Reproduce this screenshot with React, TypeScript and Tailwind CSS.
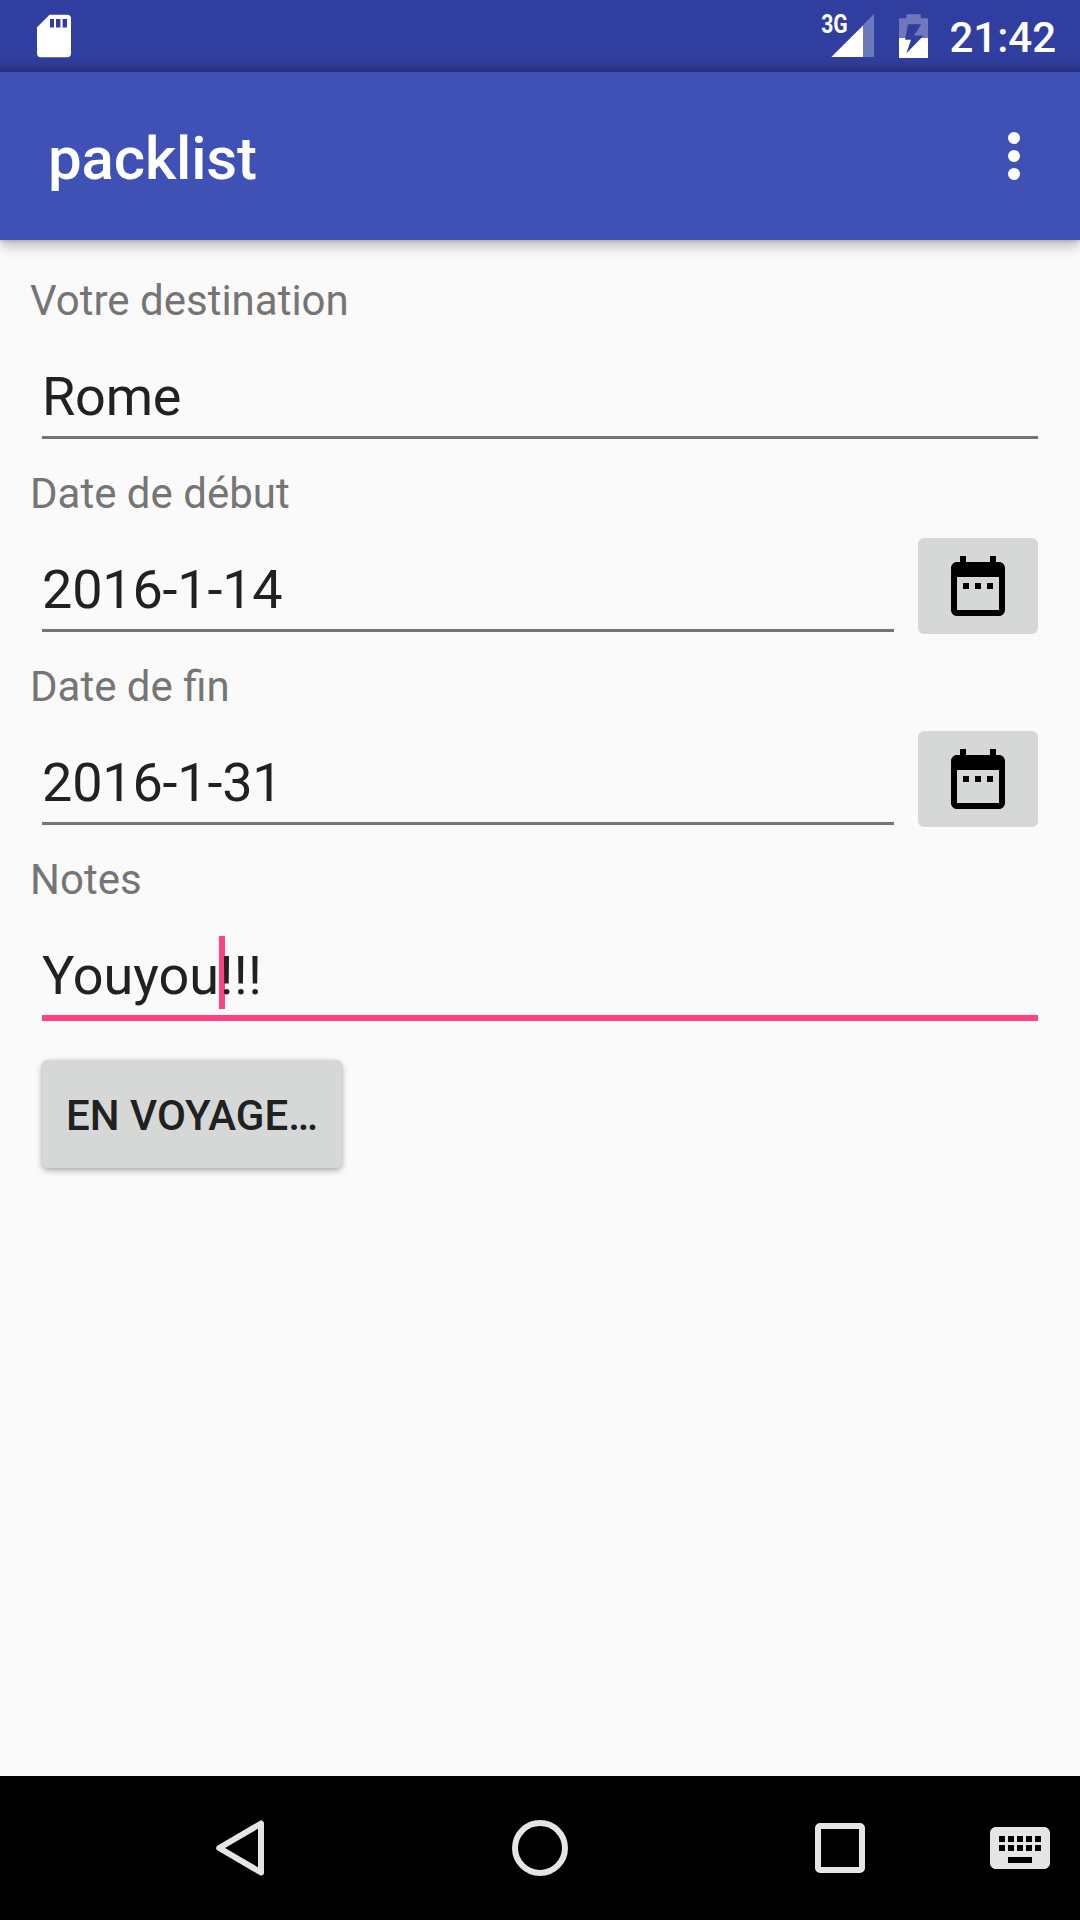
import React from "react";

function SdCardIcon() {
  return (
    <svg className="block h-[72px] w-[72px]" viewBox="0 0 72 72">
      <path
        fill="#fff"
        fillRule="evenodd"
        d="M13.6 14.7H31a4 4 0 0 1 4 4V53.2a4 4 0 0 1-4 4H5a4 4 0 0 1-4-4V27.2zM14 19v8.5h4V19zm6 0v8.5h4.4V19zm6.6 0v8.5H31V19z"
      />
    </svg>
  );
}

function SignalIcon() {
  return (
    <svg className="block h-[72px] w-[60px]" viewBox="0 0 60 72">
      <path fill="#fff" fillOpacity="0.3" d="M54 14v43H43V25z" />
      <path fill="#fff" d="M43 25.5V57H11.3z" />
      <text
        x="1.2"
        y="33.4"
        fill="#fff"
        fontFamily="Roboto, sans-serif"
        fontWeight="700"
        fontSize="25.5"
        textLength="26.5"
        lengthAdjust="spacingAndGlyphs"
      >
        3G
      </text>
    </svg>
  );
}

function BatteryIcon() {
  return (
    <svg className="block h-[72px] w-[30px]" viewBox="0 0 30 72">
      <path fill="#7078bb" d="M7.3 14.2h14.4v4H29v20H0v-20h7.3z" />
      <path fill="#fff" d="M0 38h29v20H0z" />
      <path fill="#303f9f" d="M9 24.3h13.3L15 35.5h9.6L7.3 53.5 12 39.8H6z" />
    </svg>
  );
}

function CalendarIcon() {
  return (
    <svg className="block h-[72px] w-[72px]" viewBox="0 0 24 24">
      <path d="M9 11H7v2h2v-2zm4 0h-2v2h2v-2zm4 0h-2v2h2v-2zm2-7h-1V2h-2v2H8V2H6v2H5c-1.11 0-1.99.9-1.99 2L3 20c0 1.1.89 2 2 2h14c1.1 0 2-.9 2-2V6c0-1.1-.9-2-2-2zm0 16H5V9h14v11z" />
    </svg>
  );
}

function StatusBar() {
  return (
    <div className="flex h-[72px] items-center bg-[#303f9f] bg-[linear-gradient(to_bottom,transparent_58px,rgba(0,0,0,0.06)_64px,rgba(0,0,0,0.22)_72px)] pr-[24px] pl-[36px]">
      <SdCardIcon />
      <div className="ml-auto flex items-center">
        <SignalIcon />
        <div className="ml-[19px]">
          <BatteryIcon />
        </div>
        <span className="ml-[20px] pt-[3px] text-[42px] leading-[74px] font-medium text-white">21:42</span>
      </div>
    </div>
  );
}

function Toolbar() {
  return (
    <header className="flex h-[168px] items-center justify-between bg-[#3f51b5] pr-[30px] pl-[48px] shadow-[0_6px_12px_rgba(0,0,0,0.25),0_1px_3px_rgba(0,0,0,0.16)]">
      <h1 className="pt-[5px] text-[60px] leading-[70px] font-medium tracking-[-0.15px] text-white">packlist</h1>
      <button aria-label="Plus" className="flex h-[144px] w-[72px] flex-col items-center justify-center gap-[6px]">
        <span className="size-[12px] rounded-full bg-white" />
        <span className="size-[12px] rounded-full bg-white" />
        <span className="size-[12px] rounded-full bg-white" />
      </button>
    </header>
  );
}

type FieldProps = {
  label: string;
  children: React.ReactNode;
  focused?: boolean;
  picker?: boolean;
};

function Field({ label, children, focused, picker }: FieldProps) {
  return (
    <div className="h-[193px]">
      <div className="h-[61px] pl-[30px] text-[42px] leading-[61px] text-[#757575]">{label}</div>
      <div className="flex items-start gap-[24px] pr-[42px] pl-[42px]">
        <div
          className={
            focused
              ? "mt-[29px] h-[82px] flex-1 border-b-[6px] border-[#ff4081] text-[54px] leading-[73px] text-[#212121]"
              : "mt-[29px] h-[79px] flex-1 border-b-[3px] border-[#757575] text-[54px] leading-[73px] tracking-[-0.2px] text-[#212121]"
          }
        >
          {children}
        </div>
        {picker && (
          <button aria-label={label} className="mt-[14px] flex h-[96px] w-[120px] items-center justify-center rounded-[6px] bg-[#d6d7d7]">
            <CalendarIcon />
          </button>
        )}
      </div>
    </div>
  );
}

function NavBar() {
  return (
    <nav className="flex h-[144px] items-center bg-black pl-[90px]">
      <div className="flex w-[300px] justify-center">
        <svg className="block size-[72px]" viewBox="0 0 72 72" fill="none" stroke="#e5e5e5" strokeWidth="6" strokeLinejoin="round">
          <path d="M57 11.5v49L15.2 36z" />
        </svg>
      </div>
      <div className="flex w-[300px] justify-center">
        <span className="size-[56px] rounded-full border-[6px] border-[#e5e5e5]" />
      </div>
      <div className="flex w-[300px] justify-center">
        <span className="size-[50px] rounded-[5px] border-[6px] border-[#e5e5e5]" />
      </div>
      <svg className="-ml-[6px] block size-[72px]" viewBox="0 0 24 24" fill="#e5e5e5">
        <path d="M20 5H4c-1.1 0-1.99.9-1.99 2L2 17c0 1.1.9 2 2 2h16c1.1 0 2-.9 2-2V7c0-1.1-.9-2-2-2zm-9 3h2v2h-2V8zm0 3h2v2h-2v-2zM8 8h2v2H8V8zm0 3h2v2H8v-2zm-1 2H5v-2h2v2zm0-3H5V8h2v2zm9 7H8v-2h8v2zm0-4h-2v-2h2v2zm0-3h-2V8h2v2zm3 3h-2v-2h2v2zm0-3h-2V8h2v2z" />
      </svg>
    </nav>
  );
}

export default function App() {
  return (
    <div className="flex h-[1920px] w-[1080px] flex-col bg-[#fafafa] font-[Roboto,sans-serif]">
      <StatusBar />
      <Toolbar />
      <main className="flex-1 pt-[30px]">
        <Field label="Votre destination">Rome</Field>
        <Field label="Date de début" picker>
          2016-1-14
        </Field>
        <Field label="Date de fin" picker>
          2016-1-31
        </Field>
        <Field label="Notes" focused>
          Youyou
          <span className="relative">
            <span className="absolute -top-[8px] left-0 h-[73px] w-[6px] bg-[#ff4081]" />
            <span className="relative ml-[0.5px] tracking-[0.3px]">!!!</span>
          </span>
        </Field>
        <button className="mt-[18px] ml-[42px] flex h-[108px] w-[300px] items-center justify-center rounded-[6px] bg-[#d6d7d7] pt-[4px] text-[42px] leading-[50px] font-medium text-[#212121] shadow-[0_3px_6px_rgba(0,0,0,0.28),0_0_3px_rgba(0,0,0,0.12)]">
          EN VOYAGE…
        </button>
      </main>
      <NavBar />
    </div>
  );
}
